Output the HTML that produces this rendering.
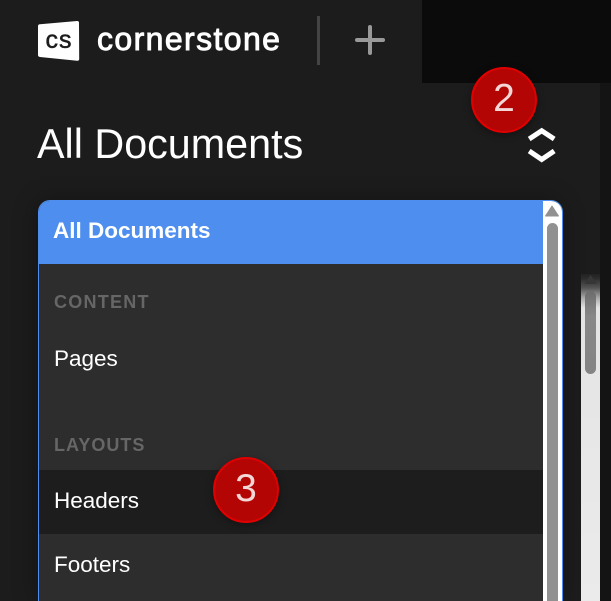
<!DOCTYPE html>
<html>
<head>
<meta charset="utf-8">
<style>
html,body{margin:0;padding:0;width:611px;height:601px;overflow:hidden;background:#1c1c1c;font-family:"Liberation Sans",sans-serif;}
#p{position:absolute;left:0;top:0;width:611px;height:601px;overflow:hidden;background:#1c1c1c;}
.a{position:absolute;}
.item{position:absolute;left:54px;color:#fff;font-size:22.5px;line-height:26px;white-space:nowrap;}
.cap{position:absolute;left:54px;color:#666;font-size:18px;font-weight:bold;letter-spacing:1.25px;line-height:20px;white-space:nowrap;}
.badge{position:absolute;width:62px;height:62px;border:2px solid #e00000;border-radius:50%;background:#b40505;color:#f3d6d6;font-size:39px;line-height:59px;text-align:center;box-shadow:0 2px 8px rgba(0,0,0,.35);}
</style>
</head>
<body>
<div id="p">
<div class="a" style="left:422px;top:0;width:189px;height:83px;background:#0b0b0b;"></div>
<div class="a" style="left:600px;top:83px;width:11px;height:518px;background:#141414;"></div>

<!-- logo -->
<svg class="a" style="left:38px;top:20px" width="42" height="42" viewBox="0 0 42 42">
<path d="M2 4.2 L39 1 Q41 .8 41 3 L41.2 39 Q41.2 41 39 40.7 L2 37 Q0 36.8 0 35 L0 6 Q0 4.4 2 4.2Z" fill="#fff"/>
<text x="21" y="28" text-anchor="middle" font-family="Liberation Sans,sans-serif" font-size="25" letter-spacing="1" stroke="#1c1c1c" stroke-width=".5" fill="#1c1c1c">cs</text>
</svg>
<div class="a" style="left:97px;top:20px;color:#fff;font-size:32px;letter-spacing:1.4px;-webkit-text-stroke:.9px #fff;line-height:38px;white-space:nowrap;">cornerstone</div>
<div class="a" style="left:317px;top:16px;width:3px;height:49px;background:#444;"></div>
<div class="a" style="left:355px;top:38px;width:30px;height:4px;border-radius:2px;background:#999;"></div>
<div class="a" style="left:368px;top:25px;width:4px;height:30px;border-radius:2px;background:#999;"></div>

<div class="a" style="left:37px;top:121px;color:#fff;font-size:41.3px;line-height:46px;white-space:nowrap;">All Documents</div>

<svg class="a" style="left:526px;top:126px" width="32" height="40" viewBox="0 0 32 40">
<path d="M3.2 13 L15.7 4.8 L28.2 13 M3.2 25 L15.7 33.5 L28.2 25" fill="none" stroke="#fff" stroke-width="5"/>
</svg>

<!-- listbox -->
<div class="a" style="left:38px;top:200px;width:525px;height:401px;background:#2d2d2d;border-radius:12px 12px 0 0;box-shadow:-2px 0 24px rgba(0,0,0,.3);"></div>
<div class="a" style="left:38px;top:200px;width:525px;height:401px;background:#2d2d2d;border-radius:12px 12px 0 0;overflow:hidden;box-sizing:border-box;border:1px solid #4d8eee;border-bottom:0;">
  <div class="a" style="left:-1px;top:-1px;width:505px;height:64px;background:#4d8eee;"></div>
  <div class="a" style="left:-1px;top:269px;width:505px;height:64px;background:#1d1d1d;"></div>
  <div class="a" style="left:504px;top:-1px;width:20px;height:402px;background:#fff;"></div>
  <div class="a" style="left:508px;top:22px;width:11px;height:400px;border-radius:6px 6px 0 0;background:#919191;"></div>
  <svg class="a" style="left:505px;top:3px" width="16" height="14" viewBox="0 0 16 14"><path d="M8 2 L14.5 12 L1.5 12Z" fill="#919191" stroke="#919191" stroke-linejoin="round"/></svg>
</div>
<div class="item" style="top:218px;left:53px;font-weight:bold;">All Documents</div>
<div class="cap" style="top:292px;">CONTENT</div>
<div class="item" style="top:346px;">Pages</div>
<div class="cap" style="top:435px;letter-spacing:1px;">LAYOUTS</div>
<div class="item" style="top:488px;">Headers</div>
<div class="item" style="top:552px;">Footers</div>

<!-- outer scrollbar -->
<div class="a" style="left:581px;top:274px;width:19px;height:327px;background:linear-gradient(180deg,#222 0,#2a2a2a 4px,#555 14px,#aaa 24px,#e4e4e4 34px,#ebebeb 100%);"></div>
<svg class="a" style="left:583px;top:274px" width="16" height="14" viewBox="0 0 16 14"><path d="M7.5 1 L14 10 L1.5 10Z" fill="#363636"/></svg>
<div class="a" style="left:585px;top:291px;width:11px;height:83px;border-radius:6px;background:linear-gradient(180deg,#6c6c6c,#888 25px,#848484);"></div>

<div class="badge" style="left:471px;top:67px;">2</div>
<div class="badge" style="left:213px;top:457px;">3</div>
</div>
</body>
</html>
